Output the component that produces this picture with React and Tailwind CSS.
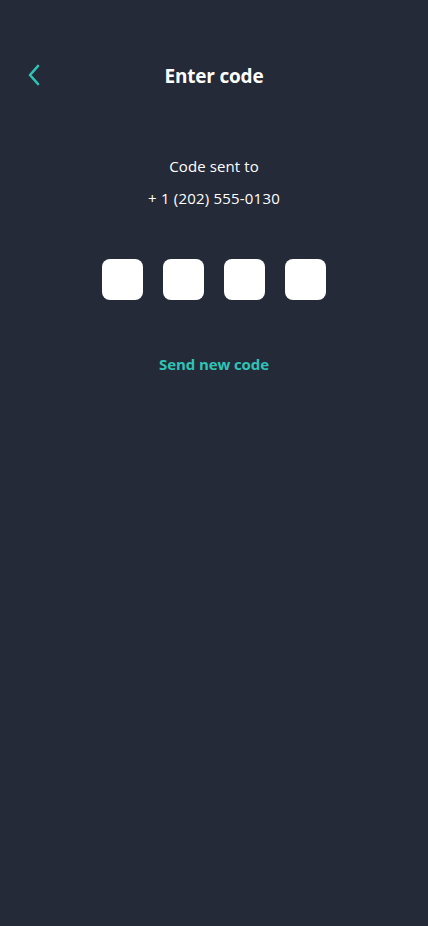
export default function App() {
  return (
    <div className="w-[428px] h-[926px] bg-[#252a38] flex flex-col" style={{ fontFamily: '"Open Sans", "Noto Sans", sans-serif' }}>
      <div className="relative h-[40px] mt-[56px] flex items-center justify-center">
        <button className="absolute left-[22px] top-[7px] w-[24px] h-[24px] flex items-center justify-center">
          <svg width="14" height="22" viewBox="0 0 14 22" fill="none">
            <path d="M11 2 L3 11 L11 20" stroke="#2ec4b6" strokeWidth="2.6" strokeLinecap="round" strokeLinejoin="round" />
          </svg>
        </button>
        <h1 className="text-white text-[19px] font-bold tracking-[-0.2px]">Enter code</h1>
      </div>
      <div className="mt-[54px] flex flex-col items-center text-white text-[15px] leading-[32px]">
        <div className="tracking-[0.1px]">Code sent to</div>
        <div className="tracking-[0.2px]">+ 1 (202) 555-0130</div>
      </div>
      <div className="mt-[45px] flex justify-center gap-[20px]">
        <div className="w-[41px] h-[41px] rounded-[8px] bg-white" />
        <div className="w-[41px] h-[41px] rounded-[8px] bg-white" />
        <div className="w-[41px] h-[41px] rounded-[8px] bg-white" />
        <div className="w-[41px] h-[41px] rounded-[8px] bg-white" />
      </div>
      <div className="mt-[53px] flex justify-center">
        <button className="text-[#2ec4b6] text-[15px] font-bold tracking-[-0.1px]">Send new code</button>
      </div>
    </div>
  );
}
